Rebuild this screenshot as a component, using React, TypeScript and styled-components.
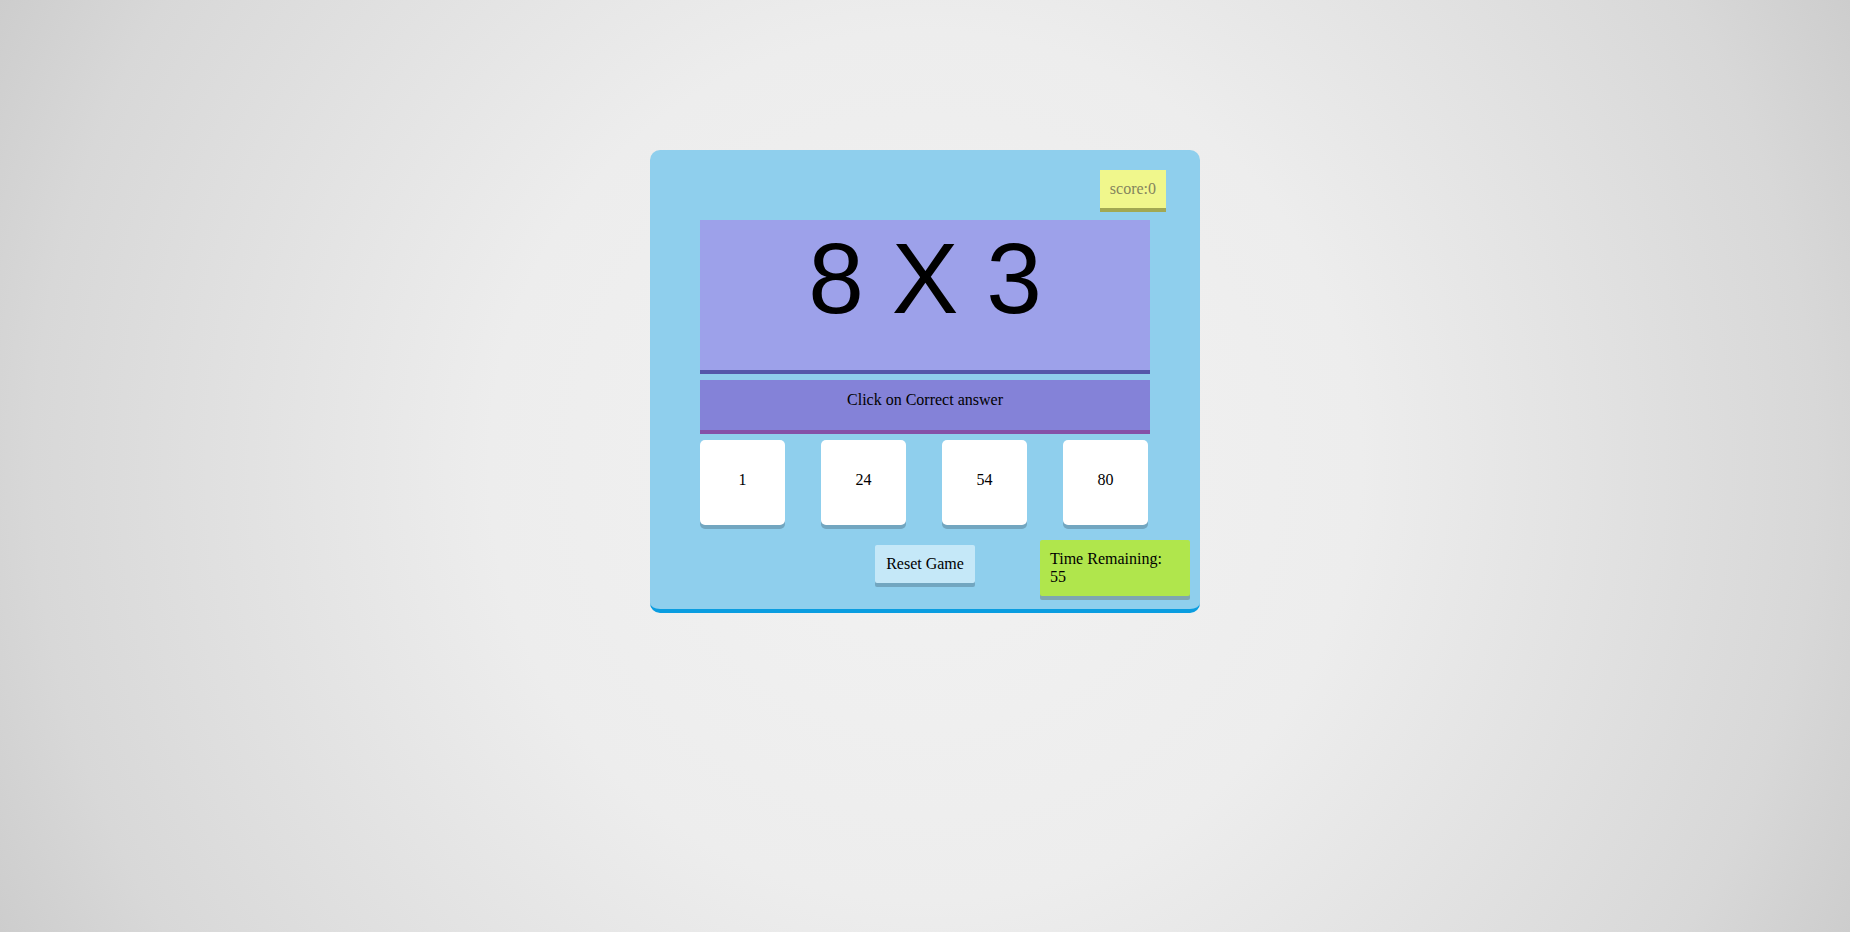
import React from "react";
import styled, { createGlobalStyle } from "styled-components";

const GlobalStyle = createGlobalStyle`
  html, body {
    margin: 0;
    padding: 0;
    height: 100%;
  }
  body {
    font-family: "Liberation Serif", "Times New Roman", serif;
    font-size: 16px;
    color: #000;
  }
  * { box-sizing: border-box; }
`;

const Page = styled.div`
  width: 100%;
  min-height: 100vh;
  padding-top: 150px;
  background: radial-gradient(
    circle at 50% 50%,
    #f2f2f2 0%,
    #ededed 42%,
    #d8d8d8 86%,
    #cdcdcd 100%
  );
  display: flex;
  justify-content: center;
  align-items: flex-start;
`;

const Board = styled.div`
  width: 550px;
  background: #8fcfed;
  border-radius: 10px;
  border-bottom: 4px solid #0a9de0;
  padding: 20px 0 13px;
  display: flex;
  flex-direction: column;
`;

const TopRow = styled.div`
  display: flex;
  justify-content: flex-end;
  padding-right: 34px;
  margin-bottom: 12px;
`;

const Score = styled.div`
  background: #f0f78c;
  color: #84845e;
  padding: 10px;
  line-height: 18px;
  box-shadow: 0 4px 0 #a2a852;
`;

const Question = styled.div`
  margin: 0 50px 6px;
  height: 154px;
  background: #9da1ea;
  border-bottom: 4px solid #5558aa;
  text-align: center;
  font-family: "Liberation Sans", Arial, sans-serif;
  font-size: 100px;
  line-height: 1.149;
  padding-top: 1px;
`;

const Instruction = styled.div`
  margin: 0 50px 6px;
  height: 54px;
  background: #8482d8;
  border-bottom: 4px solid #8551a8;
  text-align: center;
  padding-top: 11px;
  line-height: 18px;
`;

const Choices = styled.div`
  display: flex;
  gap: 36px;
  margin: 0 50px;
`;

const Choice = styled.div`
  width: 85px;
  height: 85px;
  background: #fff;
  border-radius: 5px;
  box-shadow: 0 4px 0 #72a6c0;
  text-align: center;
  padding-top: 31px;
  line-height: 18px;
  cursor: pointer;
`;

const Footer = styled.div`
  display: grid;
  grid-template-columns: 1fr auto 1fr;
  align-items: start;
  margin-top: 15px;
`;

const ResetButton = styled.button`
  grid-column: 2;
  margin-top: 5px;
  width: 100px;
  height: 38px;
  padding: 10px;
  border: none;
  border-radius: 2px;
  background: #c5e8f8;
  box-shadow: 0 4px 0 #72a6c0;
  font: inherit;
  line-height: 18px;
  color: #000;
  cursor: pointer;
`;

const Timer = styled.div`
  grid-column: 3;
  justify-self: end;
  margin-right: 10px;
  width: 150px;
  height: 56px;
  padding: 10px;
  background: #b0e64c;
  border-radius: 2px;
  box-shadow: 0 4px 0 #7ea7b0;
  line-height: 18px;
`;

const answers = [1, 24, 54, 80];

export default function App() {
  return (
    <>
      <GlobalStyle />
      <Page>
        <Board>
          <TopRow>
            <Score>score:0</Score>
          </TopRow>
          <Question>8 X 3</Question>
          <Instruction>Click on Correct answer</Instruction>
          <Choices>
            {answers.map((a) => (
              <Choice key={a}>{a}</Choice>
            ))}
          </Choices>
          <Footer>
            <ResetButton>Reset Game</ResetButton>
            <Timer>
              Time Remaining:
              <br />
              55
            </Timer>
          </Footer>
        </Board>
      </Page>
    </>
  );
}
